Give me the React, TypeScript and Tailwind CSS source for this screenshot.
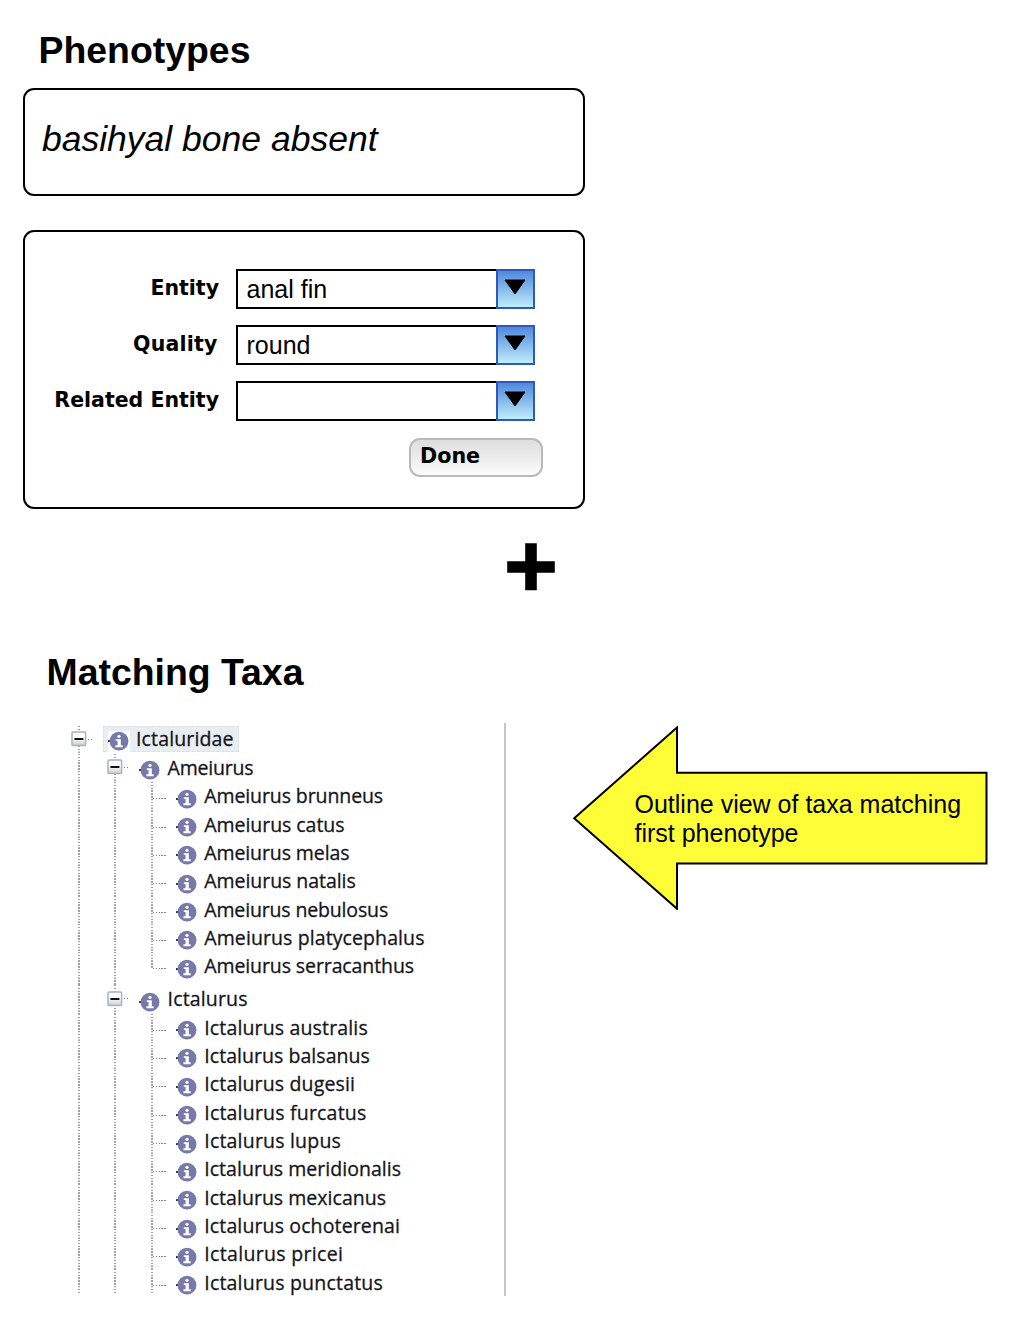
import React from "react";
import clsx from "clsx";

const verticalDots =
  "bg-[repeating-linear-gradient(to_bottom,#a0a0a0_0px,#a0a0a0_1.3px,#ffffff_1.5px,#ffffff_2.7px,#a0a0a0_2.84px)]";
const horizontalDots =
  "bg-[repeating-linear-gradient(to_right,#7c7c7c_0px,#7c7c7c_1.3px,#ffffff_1.5px,#ffffff_2.7px,#7c7c7c_2.84px)]";

type Taxon = { name: string; level: 0 | 1 | 2; spacing: string; last?: boolean };

const taxa: Taxon[] = [
  { name: "Ictaluridae", level: 0, spacing: "tracking-[0.15px]" },
  { name: "Ameiurus", level: 1, spacing: "tracking-[-0.2px]" },
  { name: "Ameiurus brunneus", level: 2, spacing: "tracking-[-0.1px]" },
  { name: "Ameiurus catus", level: 2, spacing: "tracking-[-0.05px]" },
  { name: "Ameiurus melas", level: 2, spacing: "tracking-[-0.1px]" },
  { name: "Ameiurus natalis", level: 2, spacing: "tracking-[-0.05px]" },
  { name: "Ameiurus nebulosus", level: 2, spacing: "tracking-[-0.15px]" },
  { name: "Ameiurus platycephalus", level: 2, spacing: "tracking-[0.1px]" },
  { name: "Ameiurus serracanthus", level: 2, spacing: "tracking-[-0.1px]", last: true },
  { name: "Ictalurus", level: 1, spacing: "tracking-[0.15px]" },
  { name: "Ictalurus australis", level: 2, spacing: "tracking-[0.15px]" },
  { name: "Ictalurus balsanus", level: 2, spacing: "tracking-[0.05px]" },
  { name: "Ictalurus dugesii", level: 2, spacing: "tracking-[0.15px]" },
  { name: "Ictalurus furcatus", level: 2, spacing: "tracking-[0.2px]" },
  { name: "Ictalurus lupus", level: 2, spacing: "tracking-[0.2px]" },
  { name: "Ictalurus meridionalis", level: 2, spacing: "tracking-[0.03px]" },
  { name: "Ictalurus mexicanus", level: 2, spacing: "tracking-[0.03px]" },
  { name: "Ictalurus ochoterenai", level: 2, spacing: "tracking-[0.13px]" },
  { name: "Ictalurus pricei", level: 2, spacing: "tracking-[0.33px]" },
  { name: "Ictalurus punctatus", level: 2, spacing: "tracking-[0.2px]" },
];

function InfoIcon() {
  return (
    <svg width="22" height="20" viewBox="0 0 22 20" className="block shrink-0">
      <rect x="0" y="9.2" width="3" height="1.7" fill="#111" />
      <circle cx="11" cy="10.2" r="9.4" fill="#777aa8" />
      <circle cx="11" cy="5.3" r="1.6" fill="#fff" />
      <path d="M7.8 8.2h5v6h1.9v2.1H7.4v-2.1h2.2V10H7.8z" fill="#fff" />
    </svg>
  );
}

function Toggle() {
  return (
    <svg width="16" height="16" viewBox="0 0 16 16" className="absolute top-[5.5px] left-[10.7px]">
      <defs>
        <linearGradient id="toggle" x1="0" y1="0" x2="0" y2="1">
          <stop offset="0.4" stopColor="#fff" />
          <stop offset="1" stopColor="#cfccc2" />
        </linearGradient>
      </defs>
      <rect x="1" y="1" width="13.6" height="13.6" rx="1.2" fill="url(#toggle)" stroke="#9fb4cb" strokeWidth="1.5" />
      <rect x="3.4" y="7" width="9" height="2" fill="#111" />
    </svg>
  );
}

function Guide({ toggle, branch, stop }: { toggle?: boolean; branch?: boolean; stop?: boolean }) {
  return (
    <div className="relative h-full w-[36.7px] shrink-0">
      <div className={clsx("ml-[17.8px] w-[2px]", verticalDots, stop ? "h-[16px]" : "h-full")} />
      {toggle && <div className={clsx("absolute top-[13px] left-[27.5px] h-px w-[6px]", horizontalDots)} />}
      {branch && <div className={clsx("absolute top-[16px] left-[19.5px] h-px w-[13px]", horizontalDots)} />}
      {toggle && <Toggle />}
    </div>
  );
}

function TaxonRow({ taxon, end }: { taxon: Taxon; end: boolean }) {
  const { name, level, spacing, last } = taxon;
  return (
    <li className={clsx("flex", last ? "h-[33.05px]" : end ? "h-[25.4px]" : "h-[28.35px]")}>
      <Guide toggle={level === 0} />
      {level > 0 && <Guide toggle={level === 1} />}
      {level > 1 && <Guide branch stop={last} />}
      <div className={clsx("flex h-[28.35px] shrink-0", level === 0 ? "ml-[6.3px]" : "ml-[5.6px]")}>
        <div
          className={clsx(
            "flex",
            level === 0 && "h-[26.5px] w-[136px] border border-dashed border-[#d9dfe4] bg-[#e8eef2] pl-[4px]",
          )}
        >
          <div className={clsx("h-[21px] shrink-0", level === 0 ? "mt-[4.8px] bg-white" : "mt-[6.5px]")}>
            <InfoIcon />
          </div>
          <span
            className={clsx(
              "font-['Open_Sans','Noto_Sans',sans-serif] text-[19.5px] leading-[27px] whitespace-nowrap text-[#15151c] [-webkit-text-stroke:0.3px_#15151c]",
              level === 0 ? "-mt-[1.5px] ml-[6px]" : "ml-[6.6px]",
              spacing,
            )}
          >
            {name}
          </span>
        </div>
      </div>
    </li>
  );
}

function Field({ label, value, labelClass }: { label: string; value: string; labelClass?: string }) {
  return (
    <div className="flex h-[39.5px]">
      <div
        className={clsx(
          "w-[194px] pt-[7px] text-right font-['DejaVu_Sans',sans-serif] text-[20.5px] leading-[25px] font-bold whitespace-nowrap",
          labelClass,
        )}
      >
        {label}
      </div>
      <div className="ml-[17px] flex w-[300px]">
        <div className="w-[260px] border-2 border-r-0 border-black pl-[8.5px] text-[25px] leading-[37px]">{value}</div>
        <div className="flex w-[39px] justify-center border-2 border-[#2f58bd] bg-linear-to-b from-[#5088da] to-[#c0ecfb] pt-[8px]">
          <svg width="22" height="16" viewBox="0 0 22 16" className="-ml-[2px] shrink-0">
            <path d="M1 1h20L11 15z" fill="#000" stroke="#000" strokeWidth="1" strokeLinejoin="round" />
          </svg>
        </div>
      </div>
    </div>
  );
}

export default function App() {
  return (
    <main className="h-[1317px] w-[1009px] overflow-hidden bg-white font-['Liberation_Sans',Arial,sans-serif] text-black">
      <h1 className="ml-[38.5px] h-[88px] pt-[29px] text-[37.4px] leading-[43px] font-bold">Phenotypes</h1>
      <section className="ml-[23px] h-[108px] w-[562px] rounded-[11px] border-2 border-black pt-[29px] pl-[17px] text-[35.5px] leading-[41px] italic">
        basihyal bone absent
      </section>
      <section className="mt-[34px] ml-[23px] flex h-[278.5px] w-[562px] flex-col gap-[16.7px] rounded-[11px] border-2 border-black pt-[37px]">
        <Field label="Entity" value="anal fin" />
        <Field label="Quality" value="round" labelClass="pr-[1.5px] tracking-[0.2px]" />
        <Field label="Related Entity" value="" />
        <button className="ml-[384px] h-[39.5px] w-[134px] shrink-0 rounded-[11px] border-2 border-[#b9b9b9] bg-linear-to-b from-[#dedede] to-[#fbfbfb] pb-[2px] pl-[9px] text-left font-['DejaVu_Sans',sans-serif] text-[20.7px] leading-[25px] font-bold">
          Done
        </button>
      </section>
      <svg width="48" height="48" viewBox="0 0 48 48" className="mt-[34px] ml-[507px] block">
        <path d="M18.2 .3h11.6v17.9h18v11.6h-18v17.5H18.2V29.8H.2V18.2h18z" fill="#000" />
      </svg>
      <h2 className="ml-[46.5px] h-[132.5px] pt-[60.5px] text-[37.4px] leading-[43px] font-bold">Matching Taxa</h2>
      <div className="flex">
        <ul className="mt-[2.5px] ml-[60px] w-[444px]">
          {taxa.map((taxon, i) => (
            <TaxonRow key={taxon.name} taxon={taxon} end={i === taxa.length - 1} />
          ))}
        </ul>
        <div className="h-[573px] w-[2px] bg-[#c4c4c4]" />
        <div className="relative mt-[3px] ml-[67px] h-[184px] w-[416px]">
          <svg width="416" height="184" viewBox="0 0 416 184" className="absolute inset-0">
            <path d="M1.2 92.2L104 1.5v45.3h309.5v90.7H104v45.3z" fill="#fffd38" stroke="#000" strokeWidth="2" />
          </svg>
          <p className="relative pt-[64px] pl-[61.5px] text-[25px] leading-[29px] whitespace-nowrap">
            Outline view of taxa matching
            <br />
            first phenotype
          </p>
        </div>
      </div>
    </main>
  );
}
